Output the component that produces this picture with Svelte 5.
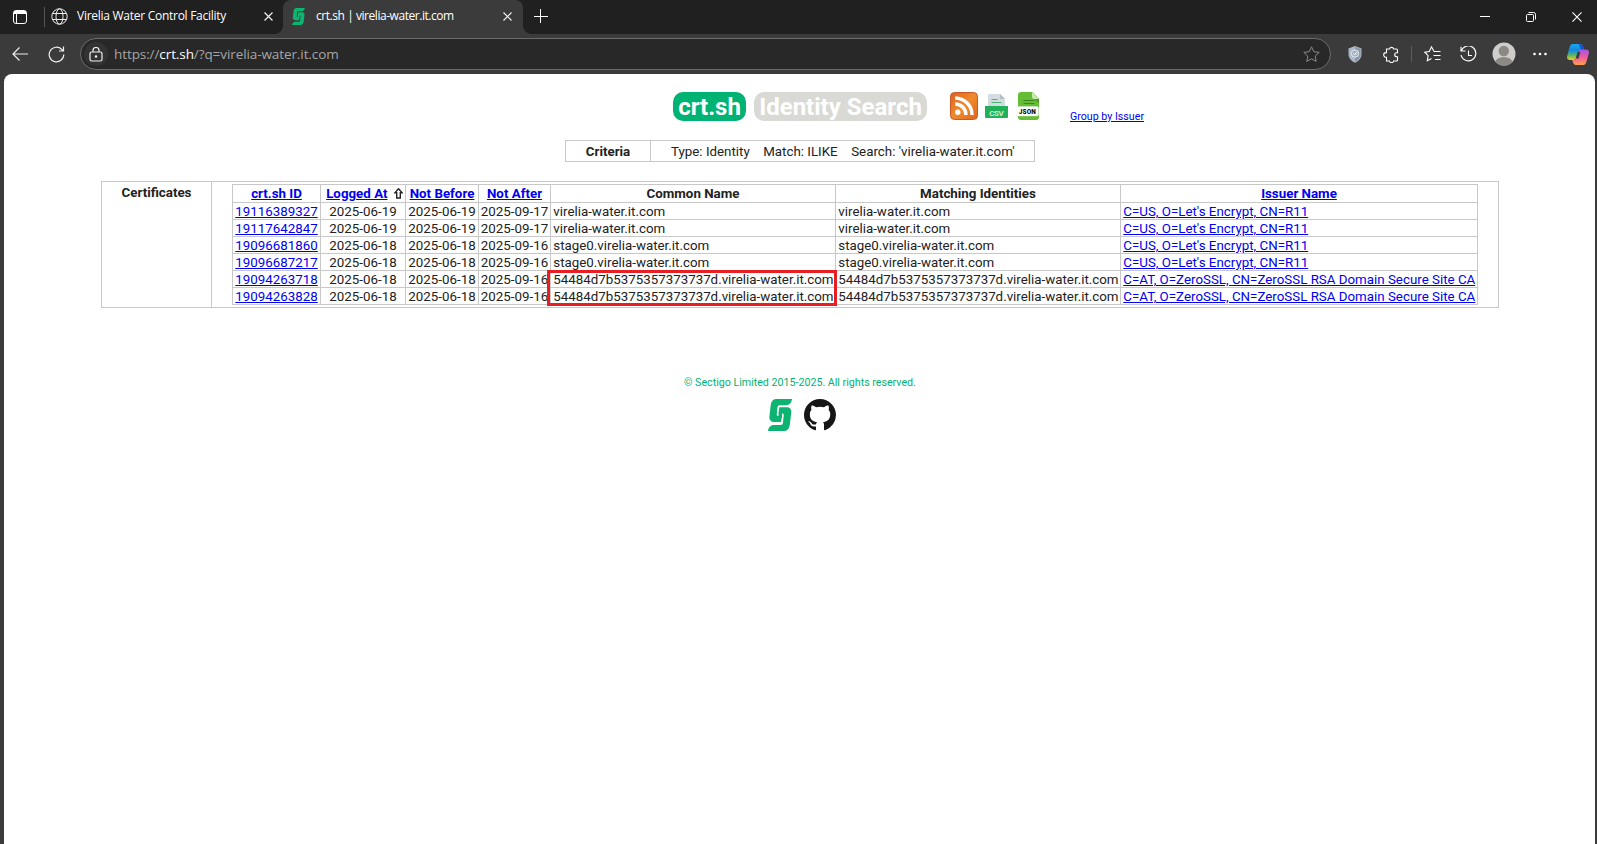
<script>
  const certs = [
    ['19116389327', '2025-06-19', '2025-06-19', '2025-09-17', 'virelia-water.it.com', "C=US, O=Let's Encrypt, CN=R11"],
    ['19117642847', '2025-06-19', '2025-06-19', '2025-09-17', 'virelia-water.it.com', "C=US, O=Let's Encrypt, CN=R11"],
    ['19096681860', '2025-06-18', '2025-06-18', '2025-09-16', 'stage0.virelia-water.it.com', "C=US, O=Let's Encrypt, CN=R11"],
    ['19096687217', '2025-06-18', '2025-06-18', '2025-09-16', 'stage0.virelia-water.it.com', "C=US, O=Let's Encrypt, CN=R11"],
    ['19094263718', '2025-06-18', '2025-06-18', '2025-09-16', '54484d7b5375357373737d.virelia-water.it.com', 'C=AT, O=ZeroSSL, CN=ZeroSSL RSA Domain Secure Site CA'],
    ['19094263828', '2025-06-18', '2025-06-18', '2025-09-16', '54484d7b5375357373737d.virelia-water.it.com', 'C=AT, O=ZeroSSL, CN=ZeroSSL RSA Domain Secure Site CA']
  ];
</script>

<svelte:head><title>crt.sh | virelia-water.it.com</title></svelte:head>

{#snippet sectigo(w, h)}
  <svg width={w} height={h} viewBox="0 0 24 32" fill="#0cb371">
    <path d="M8.500 0H24C23.600 3.500 21.500 6.200 18 6.200H12C10.300 6.200 9.700 7 9.500 8.500L8.800 15C8.600 16.500 9.200 17 10.500 17H13.800L13.200 23H6.500C3 23 1 21 1.400 17.500L2.800 5.500C3.300 2 5.300 0 8.500 0Z" />
    <path d="M11.300 8.200H18.500C22 8.200 23.700 10.200 23.300 13.500L21.700 26.500C21.200 30 19 32 16 32H0C.5 28.500 2.500 26 6 26H12.500C14.200 26 14.700 25.300 14.900 24L15.700 16.500C15.900 15 15.300 14.500 14 14.500H10.600Z" />
    <path d="M10.900 12H14V19H10.200Z" />
  </svg>
{/snippet}

<div class="window">
  <header class="tabs">
    <svg class="workspace" width="16" height="16" viewBox="0 0 16 16" fill="none" stroke="#fff"><rect x="1.500" y="1.500" width="13" height="13" rx="2.500" /><path d="M2 3.500h12" stroke-width="3" /><path d="M4.500 4v10" /></svg>
    <i class="tabline"></i>
    <div class="tab first">
      <svg width="17" height="17" viewBox="0 0 17 17" fill="none" stroke="#eee"><circle cx="8.500" cy="8.500" r="7.700" /><ellipse cx="8.500" cy="8.500" rx="3.500" ry="7.700" /><path d="M1.500 5.500h14M1.500 11.500h14" /></svg>
      <span class="t1">Virelia Water Control Facility</span>
      <svg class="close" width="9" height="9" viewBox="0 0 9 9" stroke="#eee" stroke-width="1.200"><path d="M.5.5l8 8M8.500.5l-8 8" /></svg>
    </div>
    <div class="tab active">
      {@render sectigo(13, 17)}
      <span class="t2">crt.sh | virelia-water.it.com</span>
      <svg class="close" width="9" height="9" viewBox="0 0 9 9" stroke="#eee" stroke-width="1.200"><path d="M.5.5l8 8M8.500.5l-8 8" /></svg>
    </div>
    <svg class="plus" width="14" height="14" viewBox="0 0 14 14" stroke="#fff"><path d="M0 7.500h14M6.500 0v14" /></svg>
    <div class="controls">
      <svg width="10" height="10" viewBox="0 0 10 10" stroke="#fff"><path d="M0 4.500h10" /></svg>
      <svg width="10" height="10" viewBox="0 0 10 10" fill="none" stroke="#fff"><rect x=".5" y="2.500" width="7" height="7" rx="1" /><path d="M2.500.5h5a2 2 0 0 1 2 2v5" /></svg>
      <svg width="10" height="10" viewBox="0 0 11 11" stroke="#fff" stroke-width="1.200"><path d="M.5.500l10 10M10.500.5l-10 10" /></svg>
    </div>
  </header>

  <nav class="toolbar">
    <svg class="back" width="16" height="14" viewBox="0 0 16 14" fill="none" stroke="#eee" stroke-width="1.200"><path d="M16 7H1M7.500.5L1 7l6.500 6.500" /></svg>
    <svg class="reload" width="17" height="17" viewBox="0 0 17 17" fill="none" stroke="#eee" stroke-width="1.200"><path d="M15.800 8.500a7.300 7.300 0 1 1-2-5L15.500 5M15.500.5V5H11" /></svg>
    <div class="address">
      <span class="lock"><svg width="14" height="15" viewBox="0 0 14 15" fill="none" stroke="#eee" stroke-width="1.200"><rect x="1" y="5" width="12" height="9" rx="1.800" /><path d="M4 5V3.500a3 3 0 0 1 6 0V5" /><circle cx="7" cy="9.500" r=".7" fill="#eee" /></svg></span>
      <span class="url">https://<b>crt.sh</b>/?q=virelia-water.it.com</span>
      <svg class="star" width="17" height="16" viewBox="0 0 17 16" fill="none" stroke="#8b8b8b" stroke-linejoin="round"><path d="M8.500.8l2.300 4.900 5.400.7-4 3.700 1 5.300-4.700-2.600-4.700 2.600 1-5.300-4-3.700 5.400-.7z" /></svg>
    </div>
    <div class="actions">
      <svg width="14" height="17" viewBox="0 0 14 17"><path d="M7 0L13.500 2.500V8C13.500 12 11 15 7 16.800C3 15 .5 12 .5 8V2.500Z" fill="#aeb8c5" /><path d="M7 1L12.500 3V8C12.500 11.500 10 14.500 7 15.700Z" fill="#8995a8" /><circle cx="7" cy="7.500" r="3.700" fill="#a6b2c8" stroke="#e3e9f0" /><path d="M5.500 7.500l1.300 1.300 2-2.600" fill="none" stroke="#fff" /></svg>
      <svg width="16" height="17" viewBox="0 0 16 17" fill="none" stroke="#fff" stroke-width="1.100"><path d="M3.500 3h3a2.100 2.100 0 0 1 4.100 0h2.900a1 1 0 0 1 1 1v2.800h-.8a2 2 0 0 0 0 4h.8V14a1 1 0 0 1-1 1h-2.900a2.100 2.100 0 0 1-4.100 0h-3V11.200H3a2.300 2.300 0 0 1 0-4.600h.5z" /></svg>
      <i class="toolline"></i>
      <svg width="17" height="16" viewBox="0 0 17 16" fill="none" stroke="#fff" stroke-width="1.100"><path d="M10 5.500L7.500.8 5.300 5.500.8 6.200l3.300 3.400-.8 5.200 4.200-2.300M10 5.500h6.500M9.500 9.500h7M11 13.500h5.500" /></svg>
      <svg width="17" height="17" viewBox="0 0 17 17" fill="none" stroke="#fff" stroke-width="1.100"><path d="M1.200 5A7.500 7.500 0 1 1 1 9M1 .8V5h4.500M8.500 4.500V9.500H12" /></svg>
      <svg width="24" height="24" viewBox="0 0 24 24"><defs><clipPath id="avatar"><circle cx="12" cy="12" r="11.500" /></clipPath></defs><circle cx="12" cy="12" r="11.500" fill="#d0cecb" /><g clip-path="url(#avatar)" fill="#8b8885"><circle cx="11.800" cy="9" r="5.200" /><ellipse cx="11.800" cy="20.500" rx="8.500" ry="5.500" /></g></svg>
      <svg width="14" height="4" viewBox="0 0 14 4" fill="#fff"><circle cx="1.500" cy="2" r="1.300" /><circle cx="7" cy="2" r="1.300" /><circle cx="12.500" cy="2" r="1.300" /></svg>
      <svg width="22" height="21" viewBox="0 0 22 21">
        <defs>
          <linearGradient id="cool" x1="0" y1="0" x2="0" y2="1"><stop offset="0" stop-color="#18a6ee" /><stop offset=".4" stop-color="#1488e0" /><stop offset=".7" stop-color="#55b568" /><stop offset="1" stop-color="#f2cf18" /></linearGradient>
          <linearGradient id="warm" x1="0" y1="0" x2="0" y2="1"><stop offset="0" stop-color="#a355ea" /><stop offset=".5" stop-color="#ef5b9d" /><stop offset="1" stop-color="#ffa04c" /></linearGradient>
        </defs>
        <path d="M6 0h7c2 0 2.600 1.200 3.200 3.200L17 6h-3c-2 0-3 1-3.600 3l-1.500 5c-.5 1.600-1.400 2-2.900 2H3C.7 16-.4 14.500.2 12L2.500 3.500C3.200 1 4 0 6 0z" fill="url(#cool)" />
        <path d="M12 0h1c2 0 2.600 1.200 3.200 3.200L17 6h-3z" fill="#1853c8" />
        <path d="M16 21H9c-2 0-2.600-1.200-3.200-3.200L5.200 16H6c2 0 3-1 3.600-3l1.500-5c.5-1.600 1.400-2.500 2.900-2.500h5c2.300 0 3.400 1.500 2.800 4l-2.300 8C18.800 20 18 21 16 21z" fill="url(#warm)" />
        <path d="M12.300 8L10 14.500" stroke="#3b3b3b" stroke-width="2.400" />
      </svg>
    </div>
  </nav>

  <main>
    <div class="heading">
      <span class="pill green">crt.sh</span>
      <span class="pill gray">Identity Search</span>
      <svg class="rss" width="28" height="28" viewBox="0 0 28 28"><defs><linearGradient id="rss" x1="0" y1="0" x2="1" y2="1"><stop offset="0" stop-color="#dc6024" /><stop offset=".5" stop-color="#f08b2c" /><stop offset="1" stop-color="#df641f" /></linearGradient></defs><rect x=".5" y=".5" width="27" height="27" rx="4" fill="url(#rss)" stroke="#c95a23" /><circle cx="7.800" cy="20.300" r="2.700" fill="#fff" /><path d="M5.200 12a10.800 10.800 0 0 1 10.800 11M5.200 6A17 17 0 0 1 22 23" fill="none" stroke="#fff" stroke-width="3.400" /></svg>
      <svg class="csv" width="23" height="24" viewBox="0 0 23 24"><path d="M3 1a1 1 0 0 1 1-1h11l5 5v18H3z" fill="#d5dce1" /><path d="M15 0l5 5h-5z" fill="#b2bdc4" /><path d="M6.500 5.500h6M6.500 8.500h10" stroke="#45b876" stroke-width="1.200" /><path d="M0 12h23v11a1 1 0 0 1-1 1H1a1 1 0 0 1-1-1z" fill="#20b15a" /><text x="11.500" y="21.500" text-anchor="middle" fill="#c5efd3" font-size="8" font-weight="700" textLength="14.500">CSV</text></svg>
      <svg class="json" width="24" height="28" viewBox="0 0 24 28"><path d="M2 3a3 3 0 0 1 3-3h11l7 7v18a3 3 0 0 1-3 3H5a3 3 0 0 1-3-3z" fill="#65bd35" /><path d="M16 0l7 7v4l-7-5z" fill="#4a9e24" /><path d="M16 0l7 7h-5a2 2 0 0 1-2-2z" fill="#c5ecaa" /><path d="M7.500 8.500h11M7.500 11.500h11" stroke="#3f8424" /><rect y="14.500" width="22.500" height="9.500" rx="1.500" fill="#fff" stroke="#d9e3d3" stroke-width=".5" /><text x="11.300" y="22" text-anchor="middle" fill="#111" font-size="6.500" font-weight="900" textLength="17">JSON</text></svg>
      <a class="group" href="#issuer">Group by Issuer</a>
    </div>

    <div class="criteria"><strong>Criteria</strong><div><span>Type: Identity</span><span>Match: ILIKE</span><span>Search: 'virelia-water.it.com'</span></div></div>

    <section class="certificates">
      <div class="label">Certificates</div>
      <div class="grid">
        <div class="row head"><span><a href="#id">crt.sh ID</a></span><span class="logged"><a href="#logged">Logged At</a><svg width="9" height="11" viewBox="0 0 9 11" fill="none" stroke="#222" stroke-width="1.400"><path d="M4.500 .8L8.200 4.800H6.300V10H2.700V4.800H.8z" /></svg></span><span><a href="#before">Not Before</a></span><span><a href="#after">Not After</a></span><span>Common Name</span><span>Matching Identities</span><span><a href="#name">Issuer Name</a></span></div>
        {#each certs as c}
          <div class="row"><span><a href="#cert">{c[0]}</a></span><span>{c[1]}</span><span>{c[2]}</span><span>{c[3]}</span><span class="left">{c[4]}</span><span class="left">{c[4]}</span><span class="left"><a href="#ca">{c[5]}</a></span></div>
        {/each}
        <i class="mark"></i>
      </div>
    </section>

    <footer>
      <p>© Sectigo Limited 2015-2025. All rights reserved.</p>
      <div class="logos">
        {@render sectigo(24, 32)}
        <svg width="32" height="32" viewBox="0 0 16 16" fill="#161616"><path fill-rule="evenodd" d="M8 0C3.580 0 0 3.580 0 8c0 3.540 2.290 6.530 5.470 7.590.4.070.55-.17.55-.38 0-.19-.01-.82-.01-1.490-2.010.37-2.530-.49-2.690-.94-.09-.23-.48-.94-.82-1.130-.28-.15-.68-.52-.01-.53.63-.01 1.080.58 1.230.82.72 1.210 1.870.87 2.330.66.070-.52.28-.87.51-1.070-1.780-.2-3.640-.89-3.640-3.950 0-.87.31-1.590.82-2.150-.08-.2-.36-1.020.08-2.120 0 0 .67-.21 2.200.82.64-.18 1.320-.27 2-.27s1.360.09 2 .27c1.530-1.040 2.200-.82 2.200-.82.44 1.100.16 1.920.08 2.120.51.56.82 1.270.82 2.150 0 3.070-1.870 3.750-3.650 3.950.29.25.54.73.54 1.480 0 1.070-.01 1.930-.01 2.200 0 .21.15.46.55.38A8.010 8.010 0 0 0 16 8c0-4.420-3.580-8-8-8z" /></svg>
      </div>
    </footer>
  </main>
</div>

<style>
  :global(body) { margin: 0; overflow: hidden; }
  * { box-sizing: border-box; }
  svg { display: block; flex: none; }
  .window { width: 1597px; height: 844px; background: #3b3b3b; display: flex; flex-direction: column; overflow: hidden; font-family: Roboto, sans-serif; color: #222; }
  a { color: #00e; text-decoration: underline; }
  .tabs { height: 34px; flex: none; background: #202020; display: flex; align-items: center; font-family: "Open Sans", sans-serif; font-size: 12px; color: #fff; white-space: nowrap; }
  .workspace { margin-left: 12px; }
  .tabline { width: 1px; height: 20px; background: #555; margin: 0 0 0 16px; }
  .tab { display: flex; align-items: center; height: 34px; }
  .tab.first { width: 238px; padding: 0 10px 2px 6px; }
  .tab.first span { margin-left: 9px; letter-spacing: -.27px; }
  .tab span { margin-top: -1px; }
  .tab .close { margin-left: auto; margin-top: 1px; }
  .tab.active { width: 240px; background: #3b3b3b; border-radius: 8px 8px 0 0; padding: 0 11px 2px 9px; position: relative; }
  .tab.active::before, .tab.active::after { content: ""; position: absolute; bottom: 0; width: 8px; height: 8px; }
  .tab.active::before { left: -8px; background: radial-gradient(circle at 0 0, #202020 7.500px, #3b3b3b 8px); }
  .tab.active::after { right: -8px; background: radial-gradient(circle at 100% 0, #202020 7.500px, #3b3b3b 8px); }
  .tab.active span { margin-left: 11px; letter-spacing: -.45px; }
  .plus { margin-left: 11px; margin-bottom: 3px; }
  .controls { margin-left: auto; display: flex; gap: 36px; padding-right: 15px; align-items: center; }
  .toolbar { height: 40px; flex: none; display: flex; align-items: center; }
  .back { margin-left: 12px; }
  .reload { margin-left: 20px; }
  .address { margin-left: 15px; width: 1251px; height: 32px; border: 1px solid #6b6b6b; border-radius: 16px; background: #282828; display: flex; align-items: center; padding: 0 10px 0 3px; font-family: "Open Sans", sans-serif; font-size: 13.500px; color: #a5a5a5; }
  .lock { width: 24px; height: 24px; background: #333; border-radius: 50%; display: grid; place-items: center; }
  .url { margin-left: 6px; letter-spacing: -.09px; }
  .url b { color: #fff; font-weight: 400; }
  .star { margin-left: auto; }
  .actions { display: flex; align-items: center; padding-left: 17px; flex: none; }
  .actions > :nth-child(2) { margin-left: 21px; }
  .toolline { width: 1px; height: 16px; background: #5d5d5d; margin-left: 12px; }
  .actions > :nth-child(4) { margin-left: 12px; }
  .actions > :nth-child(5) { margin-left: 19px; }
  .actions > :nth-child(6) { margin-left: 15px; }
  .actions > :nth-child(7) { margin-left: 17px; }
  .actions > :nth-child(8) { margin-left: 20px; }
  main { margin: 0 2px 0 4px; flex: 1; background: #fff; border-radius: 8px 8px 0 0; font-size: 13.333px; }
  .heading { display: flex; align-items: flex-end; height: 47px; padding-left: 669px; }
  .pill { height: 29px; line-height: 30px; border-radius: 10px; color: #fff; font-size: 24px; font-weight: 700; text-align: center; white-space: nowrap; }
  .green { width: 73px; background: #00b373; }
  .gray { width: 173px; margin-left: 8px; background: #d9d9d5; }
  .rss { margin: 0 0 1px 23px; }
  .csv { margin: 0 0 3px 7px; }
  .json { margin: 0 0 1px 8px; }
  .group { margin-left: 30px; margin-bottom: -2px; font-size: 10.670px; line-height: 13px; }
  .criteria { width: 470px; height: 22px; margin: 19px 0 0 561px; border: 1px solid #c8c8c8; display: flex; line-height: 22px; }
  .criteria strong { width: 85px; text-align: center; border-right: 1px solid #c8c8c8; }
  .criteria div { display: flex; padding-left: 20px; gap: 13.500px; height: 20px; white-space: nowrap; }
  .certificates { width: 1398px; height: 127px; margin: 19px 0 0 97px; border: 1px solid #c8c8c8; display: flex; }
  .label { width: 110px; border-right: 1px solid #c8c8c8; text-align: center; font-weight: 700; line-height: 22px; }
  .grid { position: relative; width: 1246px; height: 121px; margin: 2px 0 0 20px; border: solid #c8c8c8; border-width: 1px 0 0 1px; }
  .row { display: grid; grid-template-columns: 88px 85px 73px 72px 285px 285px 357px; height: 17px; line-height: 17px; text-align: center; white-space: nowrap; }
  .row span { height: 17px; border: solid #c8c8c8; border-width: 0 1px 1px 0; }
  .row.head, .row.head span { height: 18px; line-height: 17px; font-weight: 700; }
  .row .left { text-align: left; padding-left: 2.300px; }
  .logged { display: flex; align-items: center; justify-content: flex-end; gap: 6.500px; padding-right: 2px; }
  .mark { position: absolute; left: 314px; top: 85px; width: 290px; height: 36px; border: 3px solid #e81e22; }
  footer { display: flex; flex-direction: column; align-items: center; margin-top: 68px; }
  footer p { margin: 0; padding-left: 1px; font-size: 10.670px; line-height: 14px; color: #00b373; }
  .logos { display: flex; gap: 12px; margin-top: 9px; padding-left: 4px; }
</style>
